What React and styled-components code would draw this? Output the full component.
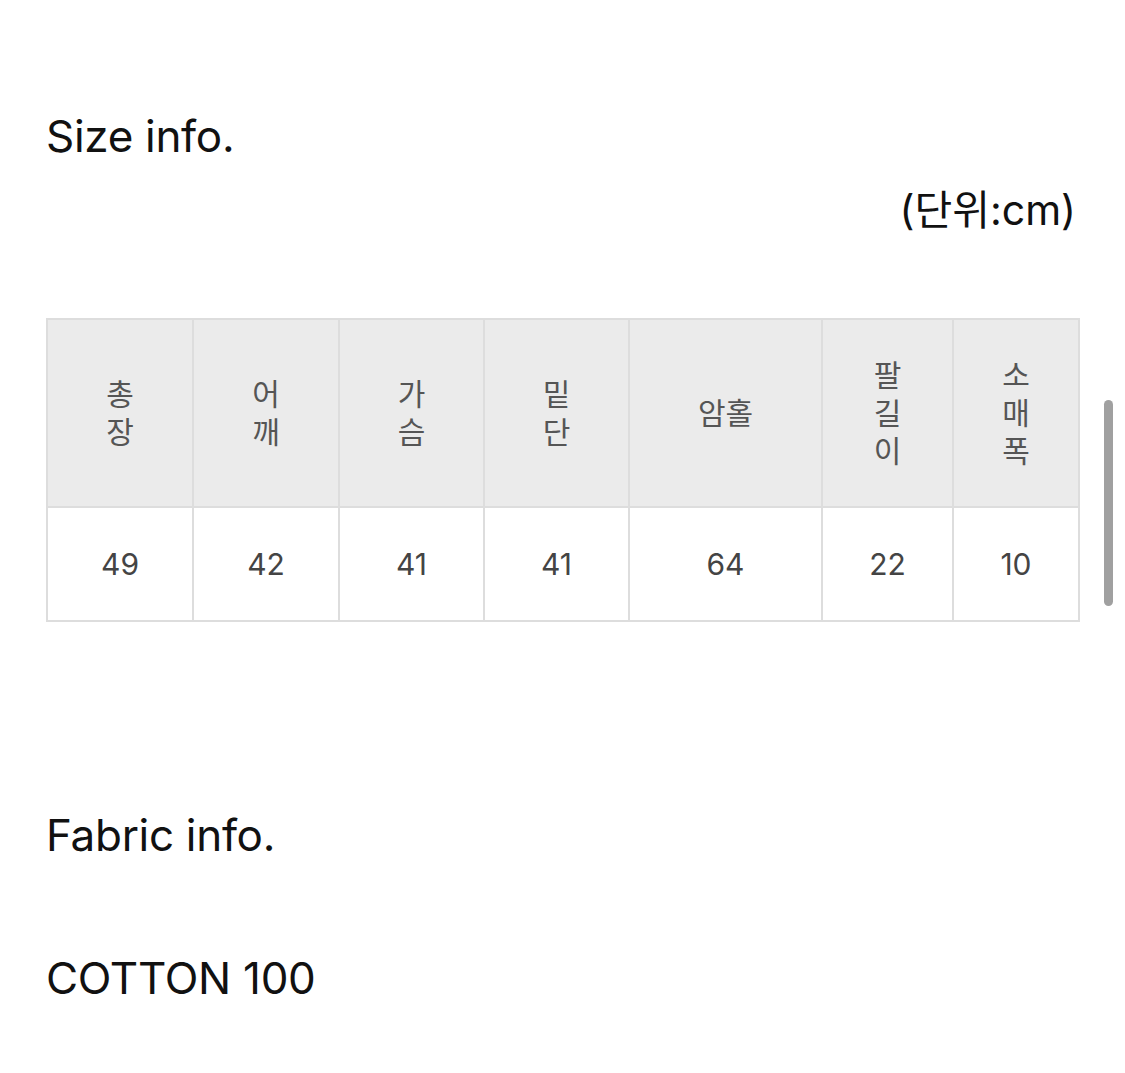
import React from "react";
import styled, { createGlobalStyle } from "styled-components";

const headers = [
  { label: "총장", width: 146 },
  { label: "어깨", width: 146 },
  { label: "가슴", width: 145 },
  { label: "밑단", width: 145 },
  { label: "암홀", width: 193 },
  { label: "팔길이", width: 131 },
  { label: "소매폭", width: 126 },
];

const values = ["49", "42", "41", "41", "64", "22", "10"];

const App = () => {
  return (
    <Page>
      <GlobalStyle />
      <Title>Size info.</Title>
      <Unit>(단위:cm)</Unit>
      <SizeTable>
        <colgroup>
          {headers.map((h) => (
            <col key={h.label} style={{ width: h.width }} />
          ))}
        </colgroup>
        <thead>
          <tr>
            {headers.map((h) => (
              <HeadCell key={h.label}>{h.label}</HeadCell>
            ))}
          </tr>
        </thead>
        <tbody>
          <tr>
            {values.map((v, i) => (
              <ValueCell key={i}>{v}</ValueCell>
            ))}
          </tr>
        </tbody>
      </SizeTable>
      <FabricTitle>Fabric info.</FabricTitle>
      <FabricText>COTTON 100</FabricText>
      <ScrollThumb />
    </Page>
  );
};

const GlobalStyle = createGlobalStyle`
  body {
    margin: 0;
    background: #ffffff;
    font-family: Inter, "Noto Sans CJK KR", sans-serif;
  }
`;

const Page = styled.div`
  position: relative;
  width: 1125px;
  height: 1073px;
  padding: 109px 47px 0 46px;
  box-sizing: border-box;
  display: flex;
  flex-direction: column;
  overflow: hidden;
`;

const Title = styled.div`
  font-size: 44px;
  line-height: 54px;
  color: #111;
  letter-spacing: -0.3px;
`;

const Unit = styled.div`
  align-self: flex-end;
  margin-top: 23px;
  margin-right: 2px;
  font-size: 41px;
  line-height: 48px;
  color: #111;
`;

const SizeTable = styled.table`
  margin-top: 84px;
  width: 1032px;
  border-collapse: collapse;
  table-layout: fixed;
  border: 2px solid #dddddd;
`;

const HeadCell = styled.th`
  height: 186px;
  padding: 0 48px;
  background: #ebebeb;
  border: 2px solid #dddddd;
  font-weight: 400;
  font-size: 30px;
  line-height: 38px;
  color: #555;
  text-align: center;
  vertical-align: middle;
`;

const ValueCell = styled.td`
  height: 112px;
  padding: 0;
  background: #fff;
  border: 2px solid #dddddd;
  font-size: 30px;
  color: #444;
  text-align: center;
  vertical-align: middle;
`;

const FabricTitle = styled(Title)`
  margin-top: 186px;
`;

const FabricText = styled(Title)`
  margin-top: 89px;
`;

const ScrollThumb = styled.div`
  position: absolute;
  top: 400px;
  left: 1104px;
  width: 9px;
  height: 206px;
  border-radius: 5px;
  background: #a0a0a0;
`;

export default App;
